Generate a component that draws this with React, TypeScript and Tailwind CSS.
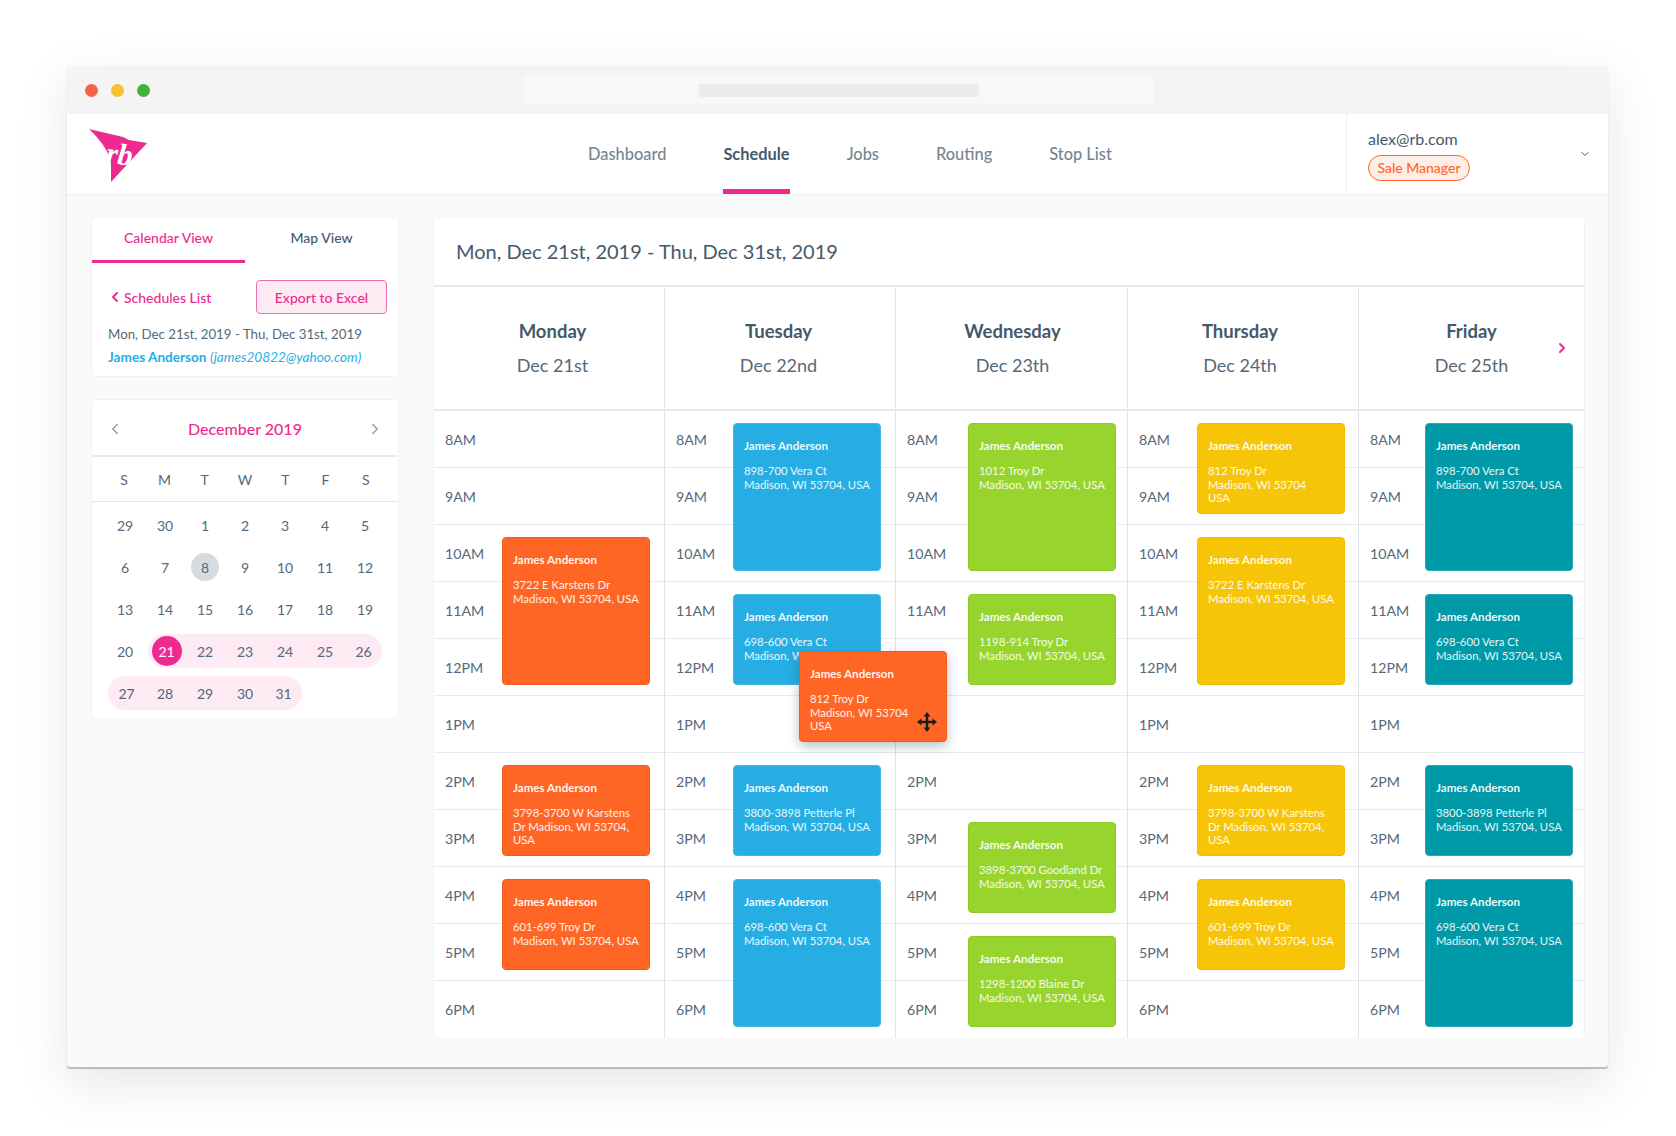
import React from 'react';
import { ChevronLeft, ChevronRight, ChevronDown } from 'lucide-react';

type Colour = 'orange' | 'blue' | 'green' | 'yellow' | 'teal';

interface CalEvent {
  row: number;
  span: number;
  address: string[];
}

interface Day {
  name: string;
  date: string;
  colour: Colour;
  events: CalEvent[];
}

const colourClass: Record<Colour, string> = {
  orange: 'bg-[#ff6626] border-[#f05a1c]',
  blue: 'bg-[#26aee4] border-[#45b9e6]',
  green: 'bg-[#97d42e] border-[#8ccb27]',
  yellow: 'bg-[#f6c507] border-[#eebd05]',
  teal: 'bg-[#0099a8] border-[#2ba8b5]',
};

const hours = ['8AM', '9AM', '10AM', '11AM', '12PM', '1PM', '2PM', '3PM', '4PM', '5PM', '6PM'];

const madison = 'Madison, WI 53704, USA';

const tuesdayEvents: CalEvent[] = [
  { row: 0, span: 3, address: ['898-700 Vera Ct', madison] },
  { row: 3, span: 2, address: ['698-600 Vera Ct', madison] },
  { row: 6, span: 2, address: ['3800-3898 Petterle Pl', madison] },
  { row: 8, span: 3, address: ['698-600 Vera Ct', madison] },
];

const days: Day[] = [
  {
    name: 'Monday',
    date: 'Dec 21st',
    colour: 'orange',
    events: [
      { row: 2, span: 3, address: ['3722 E Karstens Dr', madison] },
      { row: 6, span: 2, address: ['3798-3700 W Karstens', 'Dr Madison, WI 53704,', 'USA'] },
      { row: 8, span: 2, address: ['601-699 Troy Dr', madison] },
    ],
  },
  { name: 'Tuesday', date: 'Dec 22nd', colour: 'blue', events: tuesdayEvents },
  {
    name: 'Wednesday',
    date: 'Dec 23th',
    colour: 'green',
    events: [
      { row: 0, span: 3, address: ['1012 Troy Dr', madison] },
      { row: 3, span: 2, address: ['1198-914 Troy Dr', madison] },
      { row: 7, span: 2, address: ['3898-3700 Goodland Dr', madison] },
      { row: 9, span: 2, address: ['1298-1200 Blaine Dr', madison] },
    ],
  },
  {
    name: 'Thursday',
    date: 'Dec 24th',
    colour: 'yellow',
    events: [
      { row: 0, span: 2, address: ['812 Troy Dr', 'Madison, WI 53704', 'USA'] },
      { row: 2, span: 3, address: ['3722 E Karstens Dr', madison] },
      { row: 6, span: 2, address: ['3798-3700 W Karstens', 'Dr Madison, WI 53704,', 'USA'] },
      { row: 8, span: 2, address: ['601-699 Troy Dr', madison] },
    ],
  },
  { name: 'Friday', date: 'Dec 25th', colour: 'teal', events: tuesdayEvents },
];

const gridClass = 'grid grid-cols-[231px_231px_232px_231px_225px]';

const labelWidth: Record<string, string> = {
  Monday: 'grid-cols-[68px_148px_1fr]',
  Tuesday: 'grid-cols-[68px_148px_1fr]',
  Wednesday: 'grid-cols-[72px_148px_1fr]',
  Thursday: 'grid-cols-[69px_148px_1fr]',
  Friday: 'grid-cols-[66px_148px_1fr]',
};

const headerOffset: Record<string, string> = {
  Monday: 'pl-[7px]',
  Tuesday: 'pr-[3px]',
  Wednesday: 'pl-[2px]',
  Thursday: 'pr-[6px]',
  Friday: '',
};

const EventCard: React.FC<{ colour: Colour; address: string[]; className?: string; style?: React.CSSProperties }> = ({
  colour,
  address,
  className = '',
  style,
}) => (
  <div
    style={style}
    className={`whitespace-nowrap rounded-[4px] border px-[10px] pt-[15px] text-[11.3px] leading-[13.6px] text-white/90 ${colourClass[colour]} ${className}`}
  >
    <div className="mb-[11px] text-[11.6px] font-bold leading-[14px] text-white/95">James Anderson</div>
    {address.map((line) => (
      <div key={line}>{line}</div>
    ))}
  </div>
);

const DayColumn: React.FC<{ day: Day; last: boolean }> = ({ day, last }) => (
  <div
    className={`grid ${labelWidth[day.name]} grid-rows-[repeat(11,57px)] ${last ? '' : 'border-r border-[#dfe5ea]'}`}
  >
    {hours.map((hour, i) => (
      <div
        key={hour}
        style={{ gridRow: i + 1 }}
        className={`col-span-full col-start-1 flex items-center pl-[11px] pt-[1px] text-[14.2px] text-[#55697a] ${
          i < hours.length - 1 ? 'border-b border-[#e6ebef]' : ''
        }`}
      >
        {hour}
      </div>
    ))}
    {day.events.map((event) => (
      <EventCard
        key={event.row}
        colour={day.colour}
        address={event.address}
        style={{ gridRow: `${event.row + 1} / span ${event.span}` }}
        className="relative col-start-2 mb-[11px] mt-[12px]"
      />
    ))}
  </div>
);

const Logo: React.FC = () => (
  <svg width="60" height="56" viewBox="0 0 60 56" className="block">
    <path d="M1 1 L35 9 L41 12 L59 15 L23 54 L23 36 Q21 20 1 1 Z" fill="#ee2a90" />
    <text
      x="18"
      y="36"
      fontFamily="'Liberation Serif', serif"
      fontStyle="italic"
      fontWeight="bold"
      fontSize="30"
      fill="#fff"
      transform="rotate(6 30 28)"
    >
      rb
    </text>
  </svg>
);

const MoveCursor: React.FC = () => (
  <svg width="20" height="20" viewBox="0 0 20 20" className="absolute bottom-[10px] right-[10px]">
    <path d="M10 3v14M3 10h14" stroke="#1c1c1c" strokeWidth="2.4" />
    <path d="M10 0l3.4 4.4H6.6zM10 20l-3.4-4.4h6.8zM0 10l4.4-3.4v6.8zM20 10l-4.4 3.4V6.6z" fill="#1c1c1c" />
  </svg>
);

const weeks = [
  ['29', '30', '1', '2', '3', '4', '5'],
  ['6', '7', '8', '9', '10', '11', '12'],
  ['13', '14', '15', '16', '17', '18', '19'],
  ['20', '21', '22', '23', '24', '25', '26'],
  ['27', '28', '29', '30', '31'],
];

const DateCell: React.FC<{ label: string; week: number; index: number }> = ({ label, week, index }) => {
  const inRange = (week === 3 && index > 0) || week === 4;
  const isStart = (week === 3 && index === 1) || (week === 4 && index === 0);
  const isEnd = (week === 3 && index === 6) || (week === 4 && index === 4);
  const isToday = week === 1 && label === '8';
  const isSelected = week === 3 && label === '21';

  return (
    <div
      className={`flex h-[34px] items-center justify-center ${inRange ? 'bg-[#fdeaf3]' : ''} ${
        isStart ? 'ml-[3px] rounded-l-full' : ''
      } ${isEnd ? 'mr-[3px] rounded-r-full' : ''}`}
    >
      <span
        className={`flex items-center justify-center rounded-full ${
          isSelected ? 'h-[30px] w-[30px] bg-[#ee2a90] text-white' : ''
        } ${isToday ? 'h-[28px] w-[28px] bg-[#d6dbde]' : ''}`}
      >
        {label}
      </span>
    </div>
  );
};

const Sidebar: React.FC = () => (
  <div className="flex w-[308px] shrink-0 flex-col gap-[22px]">
    <div className="h-[160px] rounded-[4px] border border-[#f0f2f4] bg-white">
      <div className="flex h-[45px] text-[14px]">
        <div className="flex w-[154px] items-center justify-center border-b-[3px] border-[#ee2a90] pb-[3px] font-medium text-[#ee2a90]">
          Calendar View
        </div>
        <div className="flex w-[154px] items-center justify-center pb-[6px] font-medium text-[#44596b]">Map View</div>
      </div>
      <div className="mt-[17px] flex items-center justify-between pl-[15px] pr-[11px]">
        <div className="flex items-center gap-[1px] text-[14px] font-medium text-[#ee2a90]">
          <ChevronLeft size={16} strokeWidth={3} />
          Schedules List
        </div>
        <div className="flex h-[34px] w-[131px] items-center justify-center rounded-[4px] border border-[#f06bb0] bg-[#fdeaf3] text-[14px] font-medium text-[#ee2a90]">
          Export to Excel
        </div>
      </div>
      <div className="mt-[9px] pl-[16px] text-[13.3px] leading-[23px] text-[#55697a]">
        <div>Mon, Dec 21st, 2019 - Thu, Dec 31st, 2019</div>
        <div className="text-[13.6px] text-[#26aee4]">
          <span className="font-bold">James Anderson</span> <span className="italic">(james20822@yahoo.com)</span>
        </div>
      </div>
    </div>

    <div className="h-[320px] rounded-[4px] border border-[#f0f2f4] bg-white">
      <div className="flex h-[57px] items-center justify-between border-b-2 border-[#e6ebef] px-[14px] pt-[3px]">
        <ChevronLeft size={18} strokeWidth={2} className="text-[#8fa0ac]" />
        <span className="text-[16px] font-medium text-[#ee2a90]">December 2019</span>
        <ChevronRight size={18} strokeWidth={2} className="text-[#8fa0ac]" />
      </div>
      <div className="grid h-[45px] grid-cols-7 items-center border-b border-[#dfe5ea] px-[12px] text-center text-[14px] text-[#55697a]">
        {['S', 'M', 'T', 'W', 'T', 'F', 'S'].map((d, i) => (
          <div key={i}>{d}</div>
        ))}
      </div>
      <div className="grid grid-cols-7 grid-rows-[repeat(5,42px)] items-center px-[13px] pt-[2px] text-[14px] text-[#55697a]">
        {weeks.map((week, w) =>
          week.map((label, i) => <DateCell key={`${w}-${i}`} label={label} week={w} index={i} />),
        )}
      </div>
    </div>
  </div>
);

const Schedule: React.FC = () => (
  <div className="w-[1152px] rounded-[4px] border border-[#f0f2f4] bg-white">
    <div className="flex h-[69px] items-center border-b-2 border-[#e6ebef] pb-[2px] pl-[22px] text-[20px] text-[#44596b]">
      Mon, Dec 21st, 2019 - Thu, Dec 31st, 2019
    </div>
    <div className={`${gridClass} relative h-[124px] border-b-2 border-[#e6ebef]`}>
      {days.map((day, i) => (
        <div
          key={day.name}
          className={`flex flex-col items-center pt-[27px] ${headerOffset[day.name]} ${
            i < days.length - 1 ? 'border-r border-[#dfe5ea]' : ''
          }`}
        >
          <div className="text-[18.5px] font-bold leading-[34px] text-[#44596b]">{day.name}</div>
          <div className="text-[18px] leading-[34px] text-[#55697a]">{day.date}</div>
        </div>
      ))}
      <ChevronRight size={16} strokeWidth={3} className="absolute right-[14px] top-[53px] text-[#ee2a90]" />
    </div>
    <div className={`${gridClass} relative`}>
      {days.map((day, i) => (
        <DayColumn key={day.name} day={day} last={i === days.length - 1} />
      ))}
      <div className="absolute left-[365px] top-[240px] h-[91px] w-[148px]">
        <EventCard
          colour="orange"
          address={['812 Troy Dr', 'Madison, WI 53704', 'USA']}
          className="h-full shadow-[0_4px_12px_rgba(60,70,80,0.35)]"
        />
        <MoveCursor />
      </div>
    </div>
  </div>
);

export default function App() {
  return (
    <div className="h-[1136px] w-[1676px] bg-white pl-[67px] pt-[66px] font-[Lato,sans-serif]">
      <div className="h-[1001px] w-[1541px] overflow-hidden rounded-[3px] bg-[#f9fafa] shadow-[0_2px_1px_rgba(120,125,130,0.45),0_16px_48px_rgba(90,100,105,0.16)]">
        <div className="relative flex h-[48px] items-center bg-[#f4f4f4]">
          <div className="ml-[18px] flex gap-[13px]">
            <span className="h-[13px] w-[13px] rounded-full bg-[#f4634a]" />
            <span className="h-[13px] w-[13px] rounded-full bg-[#f9c02e]" />
            <span className="h-[13px] w-[13px] rounded-full bg-[#3fb23c]" />
          </div>
          <div className="ml-[373px] flex h-[28px] w-[631px] items-center justify-center rounded-[2px] bg-[#f8f8f8]">
            <div className="h-[13px] w-[280px] rounded-[2px] bg-[#ebebeb]" />
          </div>
        </div>
        <div className="flex h-[81px] border-b border-[#f0f0f0] bg-white">
          <div className="w-[521px] pl-[21px] pt-[14px]">
            <Logo />
          </div>
          <nav className="flex gap-[57px] text-[16.4px] font-medium text-[#75868f]">
            <span className="flex items-center">Dashboard</span>
            <span className="flex items-center border-b-[5px] border-[#ee2a90] pt-[5px] font-bold text-[#44596b]">
              Schedule
            </span>
            <span className="flex items-center">Jobs</span>
            <span className="flex items-center">Routing</span>
            <span className="flex items-center">Stop List</span>
          </nav>
          <div className="ml-auto flex w-[262px] items-center justify-between border-l border-[#eef0f2] pl-[21px] pr-[17px]">
            <div>
              <div className="text-[16px] leading-[22px] text-[#44596b]">alex@rb.com</div>
              <div className="mt-[5px] flex h-[26px] w-[102px] items-center justify-center rounded-full border border-[#ff6626] bg-[#ffeee7] text-[14px] font-medium text-[#ff6626]">
                Sale Manager
              </div>
            </div>
            <ChevronDown size={12} strokeWidth={2} className="text-[#44596b]" />
          </div>
        </div>
        <div className="flex gap-[34px] pl-[24px] pt-[22px]">
          <Sidebar />
          <Schedule />
        </div>
      </div>
    </div>
  );
}
